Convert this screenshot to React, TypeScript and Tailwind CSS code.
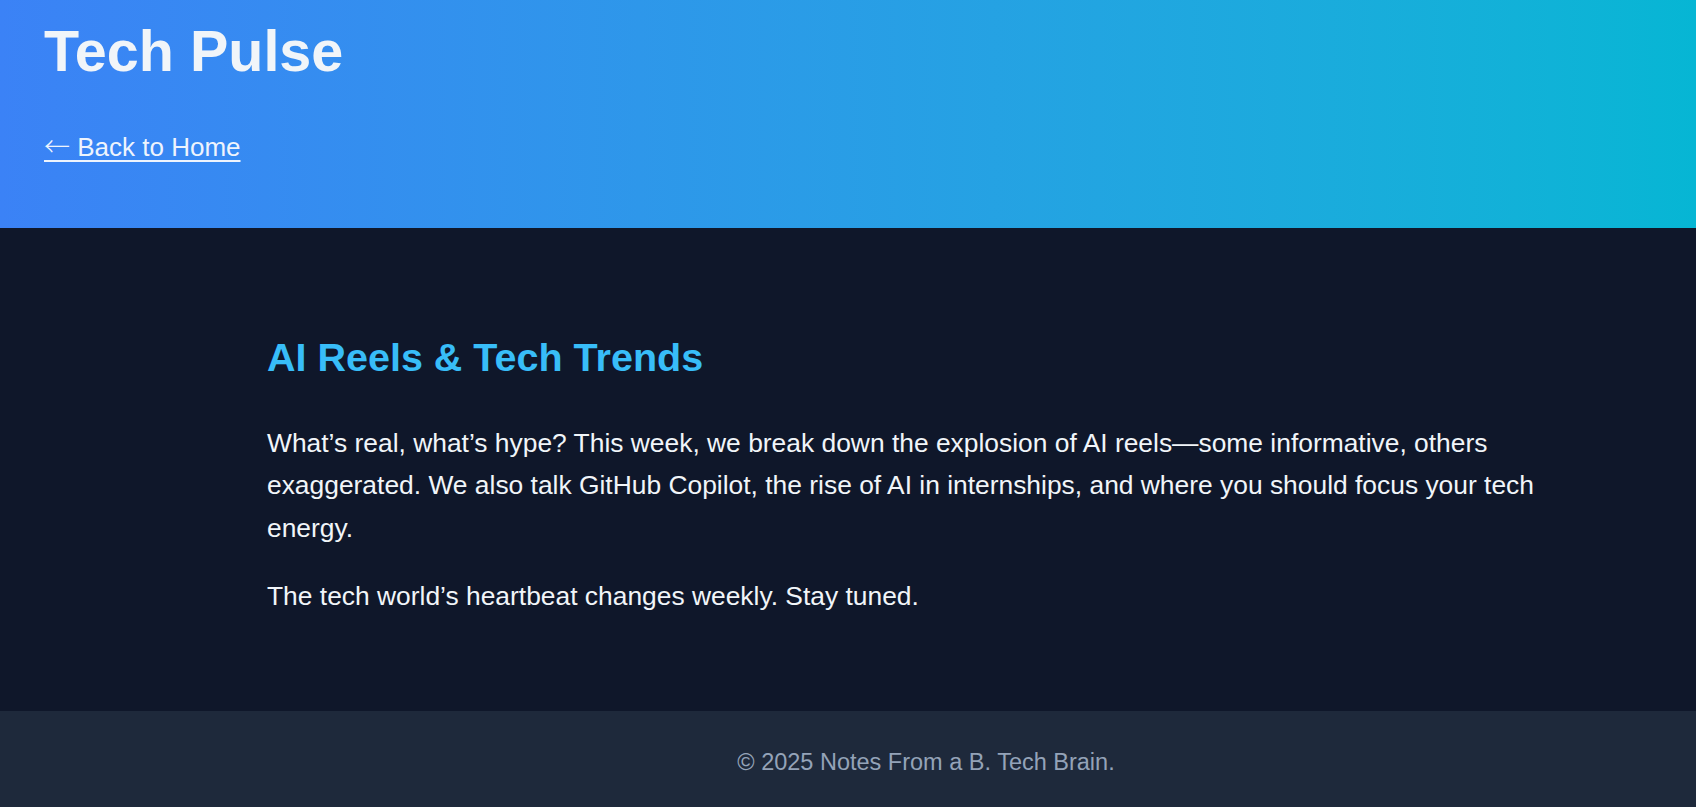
export default function App() {
  return (
    <div className="min-h-screen bg-[#0f172a] font-['Liberation_Sans',Arial,sans-serif]">
      <header className="h-[228px] bg-linear-to-r from-[#3b82f6] to-[#06b6d4] px-[44px] pt-[19px]">
        <h1 className="text-[57.5px] leading-[64px] font-bold text-[#f1f5f9]">Tech Pulse</h1>
        <a
          href="#"
          className="mt-[46px] block w-fit text-[26px] leading-[32px] text-[#eef4fd] underline decoration-[2px] underline-offset-[4px]"
        >
          <span className="font-['Noto_Sans_CJK_SC',sans-serif] font-light">←</span> Back to Home
        </a>
      </header>

      <main className="pt-[106px] pb-[94px]">
        <article className="ml-[267px] w-[1318px]">
          <h2 className="mb-[41px] text-[39.5px] leading-[47px] font-bold text-[#38bdf8]">
            AI Reels &amp; Tech Trends
          </h2>
          <p className="mb-[26px] text-[26.4px] leading-[42.3px] text-[#f1f5f9]">
            What’s real, what’s hype? This week, we break down the explosion of AI reels—some informative, others
            exaggerated. We also talk GitHub Copilot, the rise of AI in internships, and where you should focus your
            tech energy.
          </p>
          <p className="text-[26.4px] leading-[42.3px] text-[#f1f5f9]">
            The tech world’s heartbeat changes weekly. Stay tuned.
          </p>
        </article>
      </main>

      <footer className="bg-[#1e293b] pt-[38px] pb-[36px]">
        <div className="ml-[267px] w-[1318px] text-center text-[23.5px] leading-[27px] text-[#94a3b8]">
          © 2025 Notes From a B. Tech Brain.
        </div>
      </footer>
    </div>
  );
}
